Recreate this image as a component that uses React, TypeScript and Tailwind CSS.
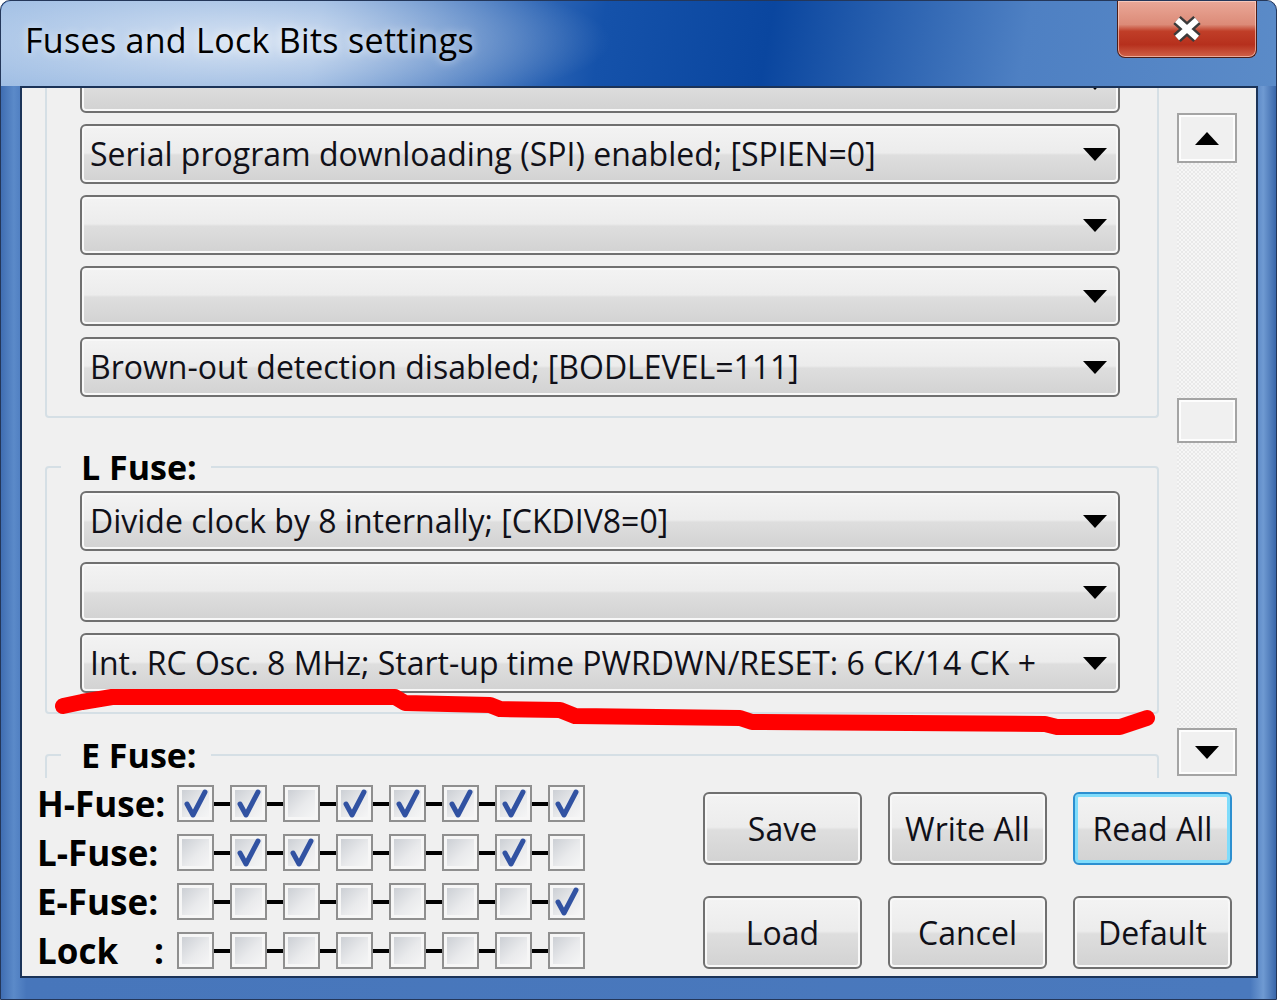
import React from "react";

const hBits = [1, 1, 0, 1, 1, 1, 1, 1];
const lBits = [0, 1, 1, 0, 0, 0, 1, 0];
const eBits = [0, 0, 0, 0, 0, 0, 0, 1];
const lockBits = [0, 0, 0, 0, 0, 0, 0, 0];

function Arrow({ up }: { up?: boolean }) {
  return (
    <svg width="24" height="13" viewBox="0 0 24 13">
      <polygon points={up ? "0,13 24,13 12,0" : "0,0 24,0 12,13"} fill="#000" />
    </svg>
  );
}

function Combo({ text }: { text?: string }) {
  return (
    <div className="flex h-[60px] shrink-0 items-center justify-between rounded-[6px] border-2 border-[#707070] bg-[linear-gradient(#f3f3f3_0%,#ececec_48%,#dedede_52%,#d2d2d2_100%)] pl-[8px] pr-[11px] shadow-[inset_0_0_0_2px_#f8f8f8]">
      <span className="overflow-hidden whitespace-nowrap text-[32px] text-[#101018]">{text}</span>
      <Arrow />
    </div>
  );
}

function Group({
  title,
  className,
  children,
}: {
  title: string;
  className: string;
  children: React.ReactNode;
}) {
  return (
    <fieldset className={"rounded-[4px] border-2 border-[#d5dfe5] pb-[19px] " + className}>
      <legend className="ml-[14px] pl-[20px] pr-[14px] text-[34px] font-bold leading-[36px] text-black">
        {title}
      </legend>
      <div className="flex flex-col gap-[11px] pl-[33px] pr-[37px] pt-[6px]">{children}</div>
    </fieldset>
  );
}

function Box({ on }: { on: boolean }) {
  return (
    <div className="flex h-[37px] w-[37px] items-center justify-center border-2 border-[#8f8f8f] bg-[linear-gradient(135deg,#c6cad0_0%,#e9eaec_55%,#f8f8f8_100%)] shadow-[inset_0_0_0_3px_#f6f6f6]">
      {on && (
        <svg width="30" height="30" viewBox="0 0 30 30">
          <path
            d="M6 15 L12 26 L24 3"
            fill="none"
            stroke="#3152a2"
            strokeWidth="5"
            strokeLinejoin="round"
            strokeLinecap="round"
          />
        </svg>
      )}
    </div>
  );
}

function BitRow({ label, bits }: { label: React.ReactNode; bits: number[] }) {
  return (
    <div className="flex h-[37px] items-center">
      <div className="w-[140px] text-[35px] font-bold leading-none text-black">{label}</div>
      <div className="flex items-center">
        {bits.map((b, i) => (
          <React.Fragment key={i}>
            {i > 0 && <div className="h-[4px] w-[16px] bg-black" />}
            <Box on={b === 1} />
          </React.Fragment>
        ))}
      </div>
    </div>
  );
}

function Btn({ label, focused }: { label: string; focused?: boolean }) {
  return (
    <button
      className={
        "flex h-[73px] w-[159px] items-center justify-center rounded-[6px] border-2 bg-[linear-gradient(#f3f3f3_0%,#ececec_48%,#dedede_52%,#d2d2d2_100%)] text-[32px] text-[#101018] " +
        (focused
          ? "border-[#2c8fd0] shadow-[inset_0_0_0_3px_#7fdcfb]"
          : "border-[#707070] shadow-[inset_0_0_0_2px_#f8f8f8]")
      }
    >
      {label}
    </button>
  );
}

function ScrollBtn({ up, h }: { up?: boolean; h: string }) {
  return (
    <div className={"flex items-center justify-center border-2 border-[#a4a4a4] bg-[#f0f0f0] shadow-[inset_0_0_0_2px_#fdfdfd] " + h}>
      {up !== undefined && <Arrow up={up} />}
    </div>
  );
}

export default function App() {
  return (
    <div className="relative h-[1003px] w-[1280px] overflow-hidden bg-white font-['Open_Sans',sans-serif]">
      <div className="flex h-[1000px] w-[1277px] flex-col rounded-t-[10px] border border-[#24375a] bg-[linear-gradient(90deg,#3f6db2_0%,#5b8ac9_1%,#4776bb_2%,#4a79bd_98%,#6f9ad2_99%,#3a67aa_100%)]">
        <div className="flex h-[85px] shrink-0 items-start justify-between rounded-t-[10px] bg-[radial-gradient(ellipse_360px_75px_at_250px_40px,rgba(255,255,255,0.65),rgba(255,255,255,0)_100%),linear-gradient(100deg,#9bbbe3_0%,#86abdb_25%,#1552aa_47%,#0a469f_60%,#4e80c3_80%,#5b8bc8_100%)] pl-[24px] pr-[19px]">
          <div className="pt-[19px] text-[34px] leading-[40px] tracking-[0.3px] text-black [text-shadow:0_0_10px_rgba(255,255,255,0.8)]">
            Fuses and Lock Bits settings
          </div>
          <div className="flex h-[57px] w-[140px] items-center justify-center rounded-b-[8px] border border-t-0 border-[#4a1d18] bg-[linear-gradient(#eaa898_0%,#dc8b78_42%,#c03e28_54%,#b6301d_78%,#d06248_100%)] shadow-[inset_0_0_0_1px_rgba(255,220,210,0.6)]">
            <svg width="34" height="30" viewBox="0 0 34 30">
              <path d="M7 6 L27 24 M27 6 L7 24" stroke="#3b3b3b" strokeWidth="11" />
              <path d="M7 6 L27 24 M27 6 L7 24" stroke="#fff" strokeWidth="6" />
            </svg>
          </div>
        </div>

        <div className="mb-[21px] ml-[19px] mr-[18px] flex h-[892px] flex-col border-2 border-[#1b3358] bg-[#f0f0f0]">
          <div className="flex h-[690px] shrink-0">
            <div className="flex-1 overflow-hidden pl-[23px] pr-[18px]">
              <div className="rounded-b-[4px] border-2 border-t-0 border-[#d5dfe5] pb-[19px]">
                <div className="-mt-[35px] flex flex-col gap-[11px] pl-[33px] pr-[37px]">
                  <Combo />
                  <Combo text="Serial program downloading (SPI) enabled; [SPIEN=0]" />
                  <Combo />
                  <Combo />
                  <Combo text="Brown-out detection disabled; [BODLEVEL=111]" />
                </div>
              </div>
              <Group title="L Fuse:" className="mt-[31px]">
                <Combo text="Divide clock by 8 internally; [CKDIV8=0]" />
                <Combo />
                <Combo text="Int. RC Osc. 8 MHz; Start-up time PWRDWN/RESET: 6 CK/14 CK +" />
              </Group>
              <Group title="E Fuse:" className="mt-[23px]">
                <Combo />
              </Group>
            </div>
            <div className="mb-[2px] mr-[19px] mt-[25px] flex w-[60px] flex-col">
              <ScrollBtn up h="h-[50px]" />
              <div className="h-[235px] bg-[repeating-conic-gradient(#f6f6f6_0_25%,#e9e9e9_0_50%)] bg-size-[4px_4px]" />
              <ScrollBtn h="h-[45px]" />
              <div className="flex-1 bg-[repeating-conic-gradient(#f6f6f6_0_25%,#e9e9e9_0_50%)] bg-size-[4px_4px]" />
              <ScrollBtn up={false} h="h-[48px]" />
            </div>
          </div>

          <div className="flex flex-1 items-start justify-between pl-[15px] pr-[24px] pt-[7px]">
            <div className="flex flex-col gap-[12px]">
              <BitRow label="H-Fuse:" bits={hBits} />
              <BitRow label="L-Fuse:" bits={lBits} />
              <BitRow label="E-Fuse:" bits={eBits} />
              <BitRow
                label={
                  <div className="flex w-[127px] justify-between">
                    <span>Lock</span>
                    <span>:</span>
                  </div>
                }
                bits={lockBits}
              />
            </div>
            <div className="mt-[7px] grid grid-cols-3 gap-x-[26px] gap-y-[31px]">
              <Btn label="Save" />
              <Btn label="Write All" />
              <Btn label="Read All" focused />
              <Btn label="Load" />
              <Btn label="Cancel" />
              <Btn label="Default" />
            </div>
          </div>
        </div>
      </div>

      <svg className="pointer-events-none absolute left-0 top-0" width="1280" height="1003">
        <path
          d="M63 706 L82 702 L112 697 L395 697 L405 703 L490 705 L500 709 L560 710 L575 716 L740 718 L752 722 L1045 724 L1057 727 L1120 727 L1147 718"
          fill="none"
          stroke="#ff0000"
          strokeWidth="16"
          strokeLinecap="round"
          strokeLinejoin="round"
        />
      </svg>
    </div>
  );
}
